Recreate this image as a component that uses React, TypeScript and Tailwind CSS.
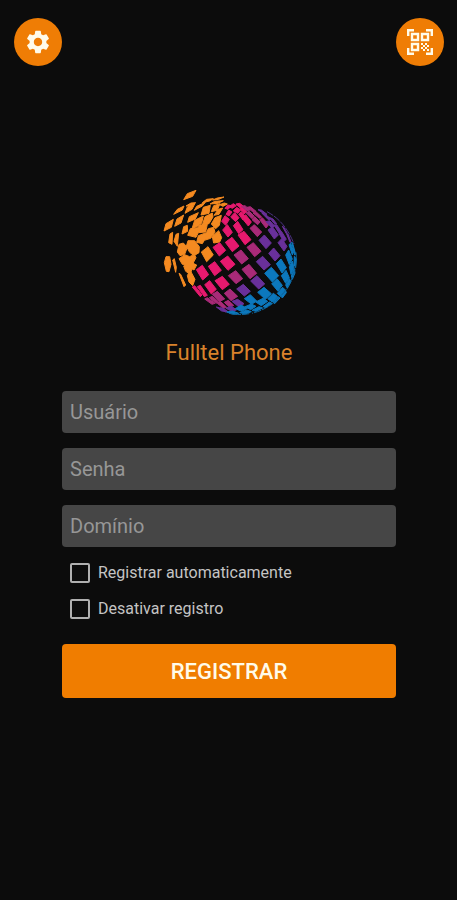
import { useState } from 'react'

const globeTiles = [
  {
    color: '#f58a20',
    tiles: [
      // loose tiles flying off
      '80,47 91,29 117,19 107,37', '50,91 61,76 81,66 76,78', '84,88 91,69 114,58 105,76',
      '87,66 102,57 116,56 103,65', '21,141 27,119 49,106 43,130', '53,127 60,105 80,93 72,117',
      '35,176 39,150 47,145 45,181', '51,172 57,151 65,148 61,187', '22,236 27,218 38,218 42,241 36,263 28,262',
      '47,228 52,224 58,250 56,265', '66,268 71,271 86,303 81,308', '75,150 80,128 91,124 92,142',
      '92,115 97,98 124,86 115,105', '112,79 119,67 145,55 136,66', '136,56 149,46 169,44 158,51',
      '167,48 181,42 201,39 185,46', '159,60 173,52 199,50 183,58',
      // dense orange side
      '132,93 139,70 160,64 156,88', '163,83 170,65 189,59 181,79', '188,62 202,57 211,60 198,67',
      '171,94 184,76 197,72 186,91', '105,134 113,109 139,96 134,118 123,126', '136,123 144,98 166,87 168,99 156,119',
      '163,120 174,101 193,94 187,124 176,134', '92,154 100,134 122,131 129,123 151,121 146,144 124,146 117,160',
      '119,175 124,155 148,146 154,134 170,130 174,145 161,163 142,169 136,179',
      '166,158 185,140 194,161 188,174 170,177', '61,204 66,181 79,177 91,190 83,211 69,215',
      '88,187 93,170 113,170 127,188 126,206 111,215 98,205', '66,224 83,212 98,218 112,211 117,221 108,238 119,243 111,258 92,246 76,241',
      '80,246 94,240 107,252 99,270 86,262', '91,275 99,258 114,286 107,305 96,294', '133,204 153,188 169,213 149,233',
    ],
  },
  {
    color: '#e6196e',
    tiles: [
      '204,73 212,63 224,65 213,76', '216,68 229,59 238,65 226,73', '237,60 248,58 260,67 249,71', '207,91 215,78 225,84 216,96',
      '229,81 239,70 251,78 242,88', '249,74 257,69 269,83 261,90', '194,112 204,95 217,106 206,124', '221,99 233,86 246,101 236,113',
      '245,90 253,83 265,98 258,108', '197,138 211,122 226,145 213,159', '229,125 242,112 258,137 245,149', '257,105 266,92 283,114 274,126',
      '168,190 188,176 206,199 187,216', '205,175 225,160 246,186 226,203', '243,153 261,142 282,167 264,182',
      '118,257 136,244 155,272 137,288', '154,247 173,233 193,259 173,275', '190,232 212,216 234,241 213,259',
      '106,309 113,305 135,333 130,338', '121,308 130,304 151,334 142,338', '143,302 158,290 178,316 163,330', '174,290 196,277 217,301 196,317',
    ],
  },
  {
    color: '#a92a78',
    tiles: [
      '253,67 264,65 279,78 270,80', '270,70 280,68 297,82 289,85', '267,86 277,82 292,97 285,104', '288,87 298,84 314,99 307,103',
      '285,107 294,99 309,114 302,122', '308,107 316,101 335,122 327,132', '279,133 292,122 314,144 301,158', '270,190 289,176 312,202 293,218',
      '231,213 252,198 274,224 254,240', '255,256 276,241 299,268 279,284', '214,275 236,260 257,284 237,299', '202,328 219,315 242,337 222,350',
      '166,331 181,322 203,345 186,353', '143,345 151,341 174,358 165,361', '157,341 166,337 184,354 177,358', '181,358 190,352 209,370 199,373',
      '202,355 214,349 230,364 218,370',
    ],
  },
  {
    color: '#69309a',
    tiles: [
      '303,77 313,78 330,91 323,91', '315,88 326,92 342,105 334,107', '337,100 348,105 359,119 351,118', '327,113 338,110 353,126 345,132',
      '351,123 359,122 373,143 366,147', '333,138 346,128 364,153 352,165', '366,148 374,143 388,166 380,173', '376,127 380,129 391,148 388,149',
      '306,169 322,153 343,177 327,194', '363,176 374,164 390,187 381,201', '335,208 350,192 369,215 354,231', '298,233 317,217 340,242 321,258',
      '281,291 300,275 323,300 305,315', '239,315 259,301 280,322 262,336', '225,352 242,346 261,359 246,369', '207,373 223,366 238,378 225,382',
      '178,369 187,371 202,382 194,381', '389,150 393,150 402,174 399,175', '190,371 199,373 213,383 204,384',
    ],
  },
  {
    color: '#0c78bd',
    tiles: [
      '323,268 343,250 365,275 346,294', '358,239 372,225 388,251 375,267', '386,213 395,198 406,225 397,242', '396,182 401,178 410,203 406,213',
      '404,174 407,178 416,211 413,213', '262,344 280,332 299,351 284,361', '302,325 321,310 343,329 325,346', '344,299 360,284 376,304 363,322',
      '373,275 387,259 397,281 386,298', '397,248 406,231 411,252 402,271', '412,217 418,225 416,250 411,242', '235,374 252,363 271,373 254,382',
      '264,368 283,360 297,367 281,377', '296,354 318,343 332,352 313,365', '332,344 349,328 361,337 346,354', '361,328 377,310 385,318 371,337',
      '386,303 397,284 402,293 391,313', '403,276 412,254 414,267 406,286', '209,384 227,381 245,388 229,391', '248,386 269,378 283,383 265,390',
      '285,379 306,368 317,372 297,382', '318,368 337,354 345,358 327,371', '347,353 363,338 369,342 353,359', '372,337 386,320 388,326 376,342',
    ],
  },
]

// stroked arcs close the lower right rim
const rimArcs = ['M417 205 Q422 258 393 308', 'M388 316 Q348 372 285 388', 'M277 389 Q245 395 216 388', 'M330 83 Q385 112 411 180']

function GlobeLogo() {
  return (
    <svg viewBox="0 0 435 405" className="w-[145px]" role="img" aria-label="Fulltel">
      {globeTiles.map((group) => (
        <g key={group.color} fill={group.color} stroke={group.color} strokeWidth="3" strokeLinejoin="round">
          {group.tiles.map((points) => (
            <polygon key={points} points={points} />
          ))}
        </g>
      ))}
      {rimArcs.map((d, index) => (
        <path key={d} d={d} fill="none" stroke={index === 3 ? '#4b3183' : '#0c659c'} strokeWidth="3" strokeDasharray="22 3" />
      ))}
    </svg>
  )
}

function GearIcon() {
  return (
    <svg viewBox="0 0 24 24" className="size-7" fill="#fffbea" aria-hidden="true">
      <path d="M19.14 12.94c.04-.3.06-.61.06-.94 0-.32-.02-.64-.07-.94l2.03-1.58a.49.49 0 0 0 .12-.61l-1.92-3.32a.488.488 0 0 0-.59-.22l-2.39.96c-.5-.38-1.03-.7-1.62-.94l-.36-2.54a.484.484 0 0 0-.48-.41h-3.84c-.24 0-.43.17-.47.41l-.36 2.54c-.59.24-1.13.57-1.62.94l-2.39-.96c-.22-.08-.47 0-.59.22L2.74 8.87c-.12.21-.08.47.12.61l2.03 1.58c-.05.3-.09.63-.09.94s.02.64.07.94l-2.03 1.58a.49.49 0 0 0-.12.61l1.92 3.32c.12.22.37.29.59.22l2.39-.96c.5.38 1.03.7 1.62.94l.36 2.54c.05.24.24.41.48.41h3.84c.24 0 .44-.17.47-.41l.36-2.54c.59-.24 1.13-.56 1.62-.94l2.39.96c.22.08.47 0 .59-.22l1.92-3.32c.12-.22.07-.47-.12-.61l-2.01-1.58zM12 15.6c-1.98 0-3.6-1.62-3.6-3.6s1.62-3.6 3.6-3.6 3.6 1.62 3.6 3.6-1.62 3.6-3.6 3.6z" />
    </svg>
  )
}

function QrIcon() {
  return (
    <svg viewBox="0 0 26 26" className="size-[26px]" fill="none" stroke="#fffbea" strokeWidth="2.4" aria-hidden="true">
      <path d="M1.2 7V1.2H7M19 1.2h5.8V7M1.2 19v5.8H7M24.8 19v5.8H19" />
      <path d="M5 5h6v6H5zM15 5h6v6h-6zM5 15h6v6H5z" />
      <path
        d="M14 14h2v2h-2zM18 14h2v2h-2zM16 16h2v2h-2zM20 16h2v2h-2zM14 18h2v2h-2zM18 18h2v2h-2zM16 20h2v2h-2zM20 20h2v2h-2z"
        fill="#fffbea"
        stroke="none"
      />
    </svg>
  )
}

const fields = [
  { id: 'usuario', label: 'Usuário', type: 'text' },
  { id: 'senha', label: 'Senha', type: 'password' },
  { id: 'dominio', label: 'Domínio', type: 'text' },
]

const options = [
  { id: 'auto', label: 'Registrar automaticamente' },
  { id: 'desativar', label: 'Desativar registro' },
]

export default function App() {
  const [values, setValues] = useState<Record<string, string>>({})

  return (
    <div className="min-h-screen bg-[#0c0c0c] font-[Roboto,sans-serif]">
      {/* Top actions */}
      <header className="flex justify-between pt-[18px] pr-[13px] pl-[14px]">
        <button type="button" aria-label="Configurações" className="flex size-12 items-center justify-center rounded-full bg-[#ef7d05]">
          <GearIcon />
        </button>
        <button type="button" aria-label="Ler QR code" className="flex size-12 items-center justify-center rounded-full bg-[#ef7d05]">
          <QrIcon />
        </button>
      </header>

      <main className="flex flex-col items-center pt-[118px] pr-[61px] pl-[62px]">
        <GlobeLogo />
        <h1 className="mt-5 text-[22px] leading-7 text-[#d9822b]">Fulltel Phone</h1>

        <form className="mt-6 w-full" onSubmit={(e) => e.preventDefault()}>
          <div className="flex flex-col gap-[15px]">
            {fields.map((field) => (
              <input
                key={field.id}
                id={field.id}
                type={field.type}
                aria-label={field.label}
                placeholder={field.label}
                value={values[field.id] ?? ''}
                onChange={(e) => setValues({ ...values, [field.id]: e.target.value })}
                className="h-[42px] w-full rounded bg-[#464646] px-2 text-xl text-white placeholder:text-[#979797]"
              />
            ))}
          </div>

          <div className="mt-4 flex flex-col gap-4 px-2">
            {options.map((option) => (
              <label key={option.id} htmlFor={option.id} className="flex items-center gap-2 text-base leading-5 text-[#c4c4c4]">
                <input
                  id={option.id}
                  type="checkbox"
                  className="size-5 appearance-none rounded-xs border-2 border-[#b0b0b0] checked:bg-[#ef7d05]"
                />
                {option.label}
              </label>
            ))}
          </div>

          <button type="submit" className="mt-[25px] h-[54px] w-full rounded bg-[#f07d00] text-[22px] font-medium text-[#fffbea]">
            REGISTRAR
          </button>
        </form>
      </main>
    </div>
  )
}
